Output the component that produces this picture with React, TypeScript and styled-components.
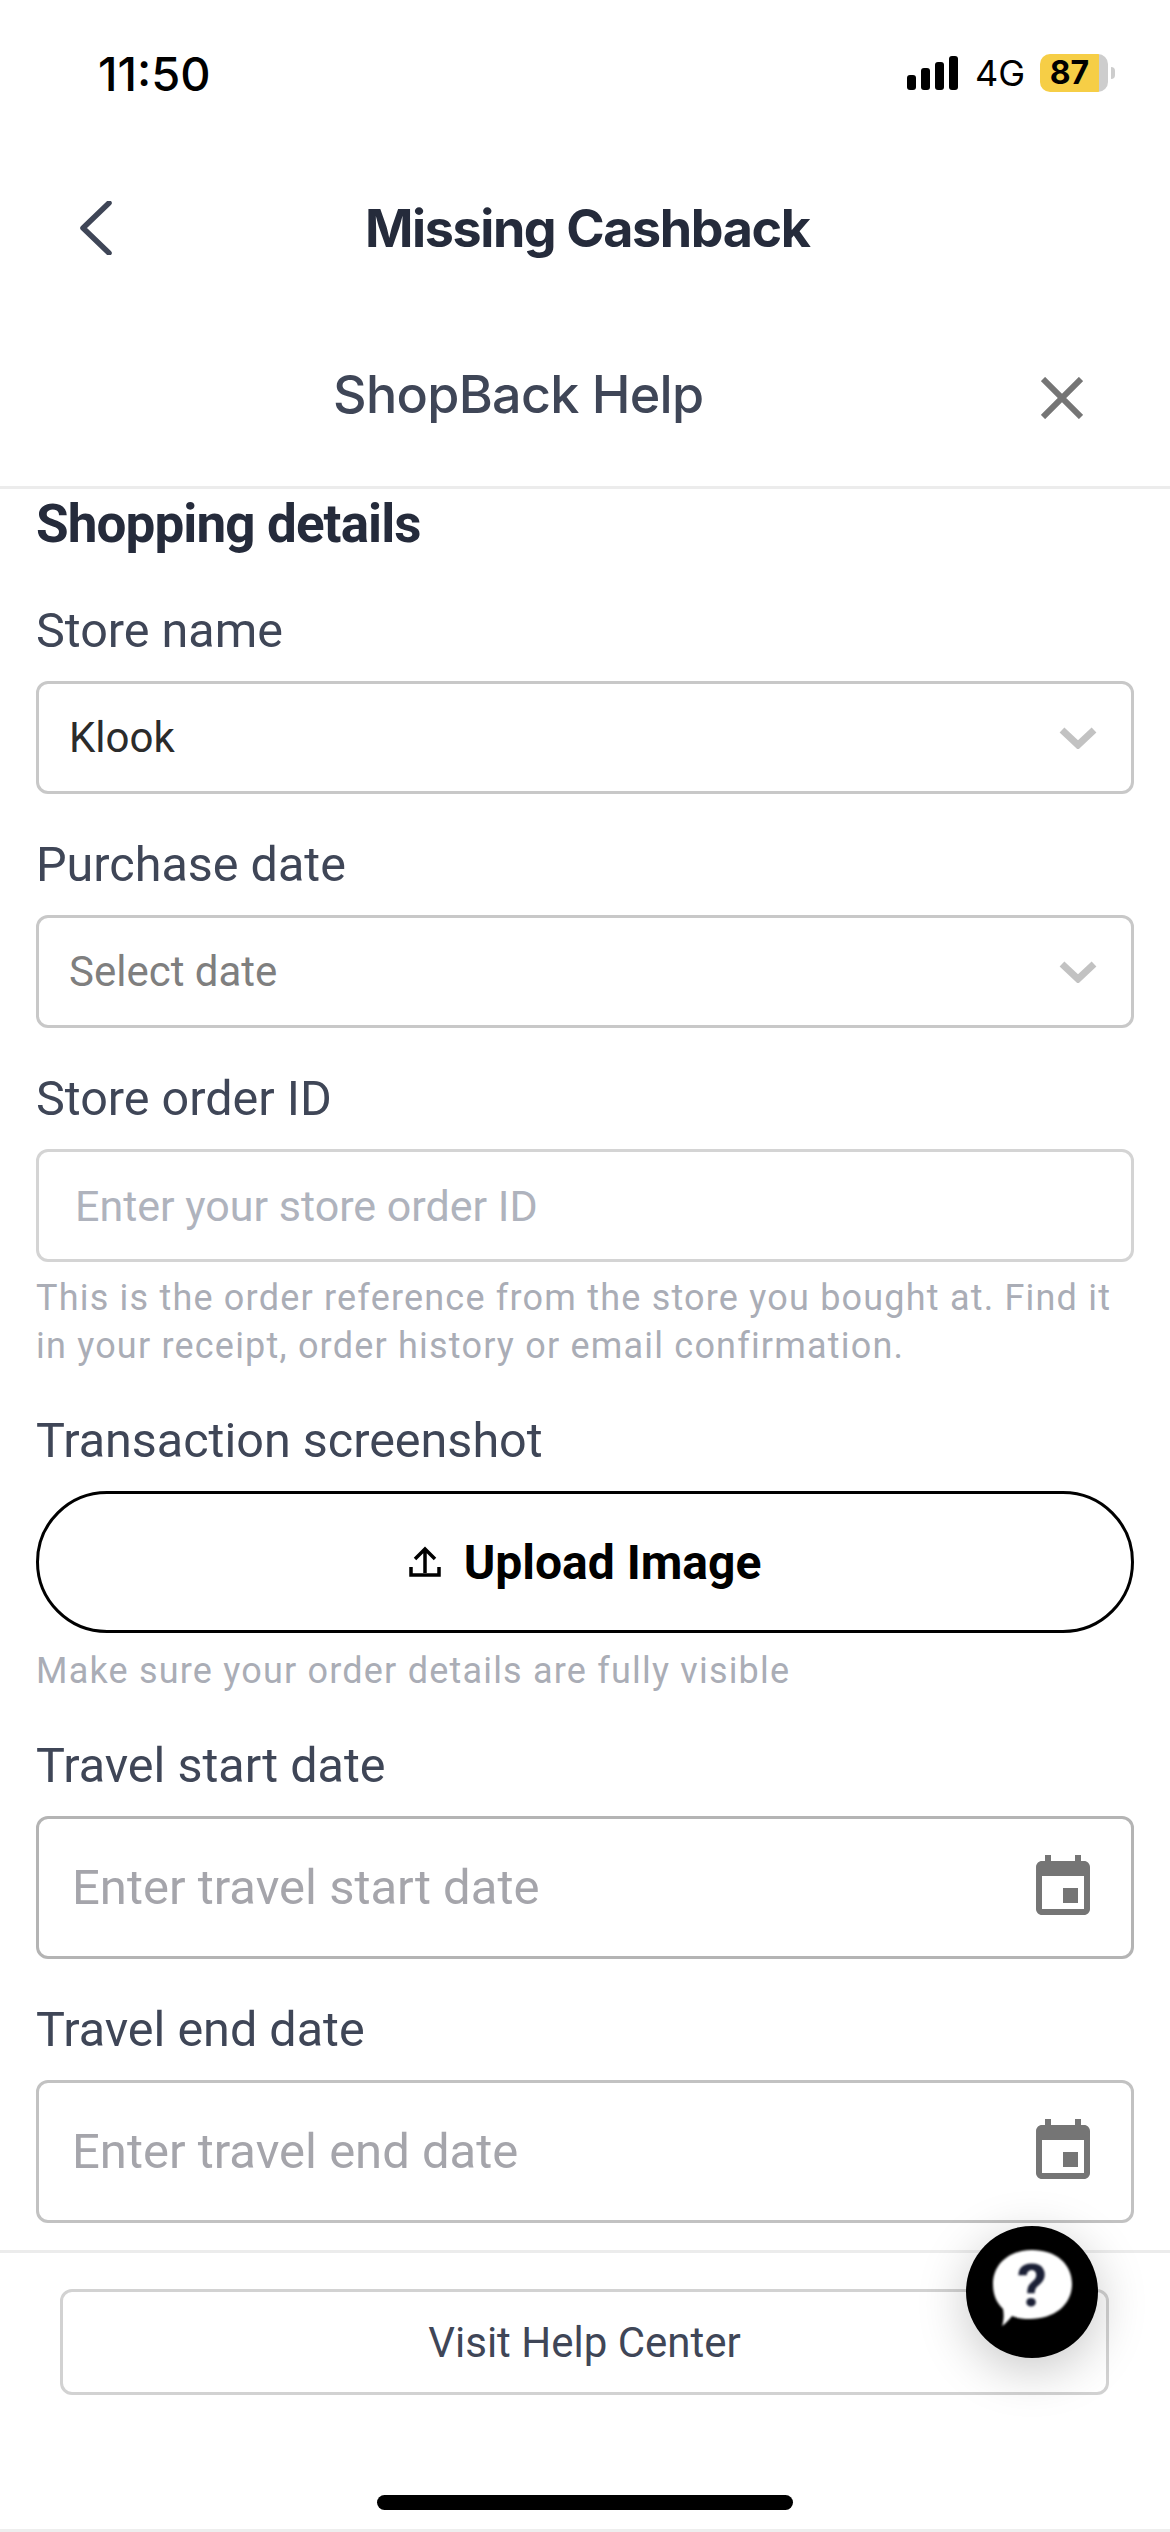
import React from "react";
import styled, { createGlobalStyle } from "styled-components";

const GlobalStyle = createGlobalStyle`
  html, body {
    margin: 0;
    padding: 0;
    background: #fff;
  }
  * {
    box-sizing: border-box;
  }
`;

const App: React.FC = () => {
  return (
    <Page>
      <GlobalStyle />
      <StatusBar>
        <Time>11:50</Time>
        <StatusIcons>
          <SignalBars>
            <Bar $height={15} />
            <Bar $height={22} />
            <Bar $height={28} />
            <Bar $height={34} />
          </SignalBars>
          <Network>4G</Network>
          <Battery>
            <BatteryLevel>87</BatteryLevel>
            <BatteryRest />
          </Battery>
          <BatteryNub />
        </StatusIcons>
      </StatusBar>

      <NavBar>
        <BackIcon viewBox="0 0 32 54">
          <path d="M29 2 L3 27 L29 52" />
        </BackIcon>
        <NavTitle>Missing Cashback</NavTitle>
      </NavBar>

      <HelpHeader>
        <HelpTitle>ShopBack Help</HelpTitle>
        <CloseIcon viewBox="0 0 42 42">
          <path d="M2 2 L40 40 M40 2 L2 40" />
        </CloseIcon>
      </HelpHeader>

      <Form>
        <SectionTitle>Shopping details</SectionTitle>

        <Label>Store name</Label>
        <SelectBox>
          <SelectValue>Klook</SelectValue>
          <Chevron />
        </SelectBox>

        <Label $spaced>Purchase date</Label>
        <SelectBox>
          <SelectValue $placeholder>Select date</SelectValue>
          <Chevron />
        </SelectBox>

        <Label $spaced>Store order ID</Label>
        <TextBox>Enter your store order ID</TextBox>
        <Hint>
          This is the order reference from the store you bought at. Find it
          <br />
          in your receipt, order history or email confirmation.
        </Hint>

        <Label $spaced>Transaction screenshot</Label>
        <UploadButton>
          <UploadIcon viewBox="0 0 32 32">
            <path d="M16 27 V4 M6 13 L16 3 L26 13" />
            <path d="M2 21 V29 H30 V21" />
          </UploadIcon>
          Upload Image
        </UploadButton>
        <Hint $wide>Make sure your order details are fully visible</Hint>

        <Label $spaced>Travel start date</Label>
        <DateBox>
          <DateText>Enter travel start date</DateText>
          <CalendarIcon />
        </DateBox>

        <Label $spaced>Travel end date</Label>
        <DateBox $light>
          <DateText>Enter travel end date</DateText>
          <CalendarIcon />
        </DateBox>
      </Form>

      <Footer>
        <HelpCenterButton>Visit Help Center</HelpCenterButton>
      </Footer>

      <HomeArea>
        <HomeBar />
      </HomeArea>

      <Fab>
        <svg width="132" height="132" viewBox="0 0 132 132">
          <path
            d="M66 24 C90 24 106 38 106 58 C106 79 88 93 64 93 C57 93 51 92 46 90 C43 94 39 98 36 100 C38 94 38 88 37 83 C30 76 27 68 27 58 C27 38 43 24 66 24 Z"
            fill="#fff"
          />
          <FabMark x="66" y="80" textAnchor="middle">
            ?
          </FabMark>
        </svg>
      </Fab>
    </Page>
  );
};

const Chevron: React.FC = () => (
  <ChevronIcon viewBox="0 0 38 22">
    <path d="M3 3 L19 18 L35 3" />
  </ChevronIcon>
);

const CalendarIcon: React.FC = () => (
  <EventIcon viewBox="0 0 24 24">
    <path d="M17 12h-5v5h5v-5zM16 1v2H8V1H6v2H5c-1.11 0-1.99.9-1.99 2L3 19c0 1.1.89 2 2 2h14c1.1 0 2-.9 2-2V5c0-1.1-.9-2-2-2h-1V1h-2zm3 18H5V8h14v11z" />
  </EventIcon>
);

const Page = styled.div`
  position: relative;
  width: 1170px;
  height: 2532px;
  overflow: hidden;
  background: #fff;
  font-family: Roboto, "Liberation Sans", sans-serif;
`;

const StatusBar = styled.div`
  height: 146px;
  display: flex;
  justify-content: space-between;
  align-items: center;
  padding: 0 55px 0 98px;
  font-family: Inter, "Liberation Sans", sans-serif;
`;

const Time = styled.div`
  font-size: 47px;
  font-weight: 500;
  color: #000;
`;

const StatusIcons = styled.div`
  display: flex;
  align-items: center;
`;

const SignalBars = styled.div`
  display: flex;
  align-items: flex-end;
  gap: 5px;
  height: 34px;
  margin-right: 17px;
`;

const Bar = styled.div<{ $height: number }>`
  width: 9px;
  height: ${(p) => p.$height}px;
  border-radius: 3px;
  background: #000;
`;

const Network = styled.div`
  width: 49px;
  font-size: 36px;
  font-weight: 400;
  color: #000;
  margin-right: 16px;
  white-space: nowrap;
`;

const Battery = styled.div`
  width: 68px;
  height: 38px;
  display: flex;
  border-radius: 10px;
  overflow: hidden;
`;

const BatteryLevel = styled.div`
  width: 59px;
  background: #f6ce46;
  color: #000;
  font-size: 32px;
  font-weight: 700;
  line-height: 38px;
  text-align: center;
`;

const BatteryRest = styled.div`
  flex: 1;
  background: #cdcdcd;
`;

const BatteryNub = styled.div`
  width: 4px;
  height: 12px;
  margin-left: 3px;
  border-radius: 0 6px 6px 0;
  background: #cdcdcd;
`;

const NavBar = styled.div`
  height: 164px;
  display: flex;
  align-items: center;
  padding-left: 80px;
  font-family: Inter, "Liberation Sans", sans-serif;
`;

const BackIcon = styled.svg`
  width: 32px;
  height: 54px;
  fill: none;
  stroke: #3f4657;
  stroke-width: 5.5;
  stroke-linecap: round;
  stroke-linejoin: round;
`;

const NavTitle = styled.div`
  margin-left: 253px;
  font-size: 52px;
  font-weight: 700;
  letter-spacing: -1.4px;
  color: #252b3b;
`;

const HelpHeader = styled.div`
  height: 179px;
  display: flex;
  align-items: center;
  padding: 0 87px 0 333px;
  justify-content: space-between;
  border-bottom: 3px solid #ececec;
  font-family: Inter, "Liberation Sans", sans-serif;
`;

const HelpTitle = styled.div`
  font-size: 52px;
  font-weight: 500;
  letter-spacing: -0.7px;
  color: #3f4657;
  margin-top: -7px;
`;

const CloseIcon = styled.svg`
  width: 42px;
  height: 42px;
  fill: none;
  stroke: #757575;
  stroke-width: 6;
`;

const Form = styled.div`
  height: 1761px;
  padding: 0 36px;
`;

const SectionTitle = styled.div`
  height: 70px;
  line-height: 70px;
  margin-bottom: 47px;
  font-size: 53px;
  font-weight: 700;
  letter-spacing: -0.9px;
  color: #252b3b;
`;

const Label = styled.div<{ $spaced?: boolean }>`
  height: 50px;
  line-height: 50px;
  margin-top: ${(p) => (p.$spaced ? "46px" : "0")};
  margin-bottom: 25px;
  font-size: 48.5px;
  color: #3f4657;
`;

const SelectBox = styled.div`
  height: 113px;
  border: 3px solid #c8c8c8;
  border-radius: 12px;
  display: flex;
  align-items: center;
  justify-content: space-between;
  padding: 0 34px 0 30px;
`;

const SelectValue = styled.div<{ $placeholder?: boolean }>`
  font-size: 42px;
  color: ${(p) => (p.$placeholder ? "#7f7f7f" : "#2b2b2b")};
`;

const ChevronIcon = styled.svg`
  width: 38px;
  height: 22px;
  fill: none;
  stroke: #c2c2c2;
  stroke-width: 7;
`;

const TextBox = styled.div`
  height: 113px;
  border: 3px solid #d4d4d4;
  border-radius: 12px;
  display: flex;
  align-items: center;
  padding-left: 36px;
  font-size: 43px;
  color: #afb3bd;
`;

const Hint = styled.div<{ $wide?: boolean }>`
  margin-top: ${(p) => (p.$wide ? "14px" : "12px")};
  font-size: 36px;
  line-height: 48px;
  letter-spacing: 1.2px;
  white-space: nowrap;
  color: #aaadb6;
`;

const UploadButton = styled.div`
  height: 142px;
  border: 3px solid #000;
  border-radius: 72px;
  display: flex;
  align-items: center;
  justify-content: center;
  gap: 23px;
  font-size: 48px;
  font-weight: 700;
  color: #000;
`;

const UploadIcon = styled.svg`
  width: 32px;
  height: 32px;
  fill: none;
  stroke: #000;
  stroke-width: 3.5;
`;

const DateBox = styled.div<{ $light?: boolean }>`
  height: 143px;
  border: 3px solid ${(p) => (p.$light ? "#c2c2c2" : "#b4b4b4")};
  border-radius: 12px;
  display: flex;
  align-items: center;
  justify-content: space-between;
  padding: 0 32px 0 33px;
`;

const DateText = styled.div`
  font-size: 49px;
  color: #a5a5ab;
`;

const EventIcon = styled.svg`
  width: 72px;
  height: 72px;
  fill: #757575;
`;

const Footer = styled.div`
  height: 245px;
  padding: 36px 61px 0 60px;
  border-top: 3px solid #ececec;
`;

const HelpCenterButton = styled.div`
  height: 106px;
  border: 3px solid #d2d2d2;
  border-radius: 12px;
  display: flex;
  align-items: center;
  justify-content: center;
  font-size: 42px;
  color: #3f4657;
`;

const HomeArea = styled.div`
  height: 37px;
  display: flex;
  justify-content: center;
  border-bottom: 3px solid #eeeeee;
`;

const HomeBar = styled.div`
  width: 416px;
  height: 15px;
  border-radius: 8px;
  background: #000;
`;

const Fab = styled.div`
  position: absolute;
  left: 966px;
  top: 2226px;
  width: 132px;
  height: 132px;
  border-radius: 50%;
  background: #000;
  box-shadow: 0 12px 50px rgba(0, 0, 0, 0.22);

  svg {
    display: block;
    filter: blur(1px);
  }
`;

const FabMark = styled.text`
  font-family: Roboto, "Liberation Sans", sans-serif;
  font-size: 60px;
  font-weight: 700;
  fill: #1b2036;
`;

export default App;
